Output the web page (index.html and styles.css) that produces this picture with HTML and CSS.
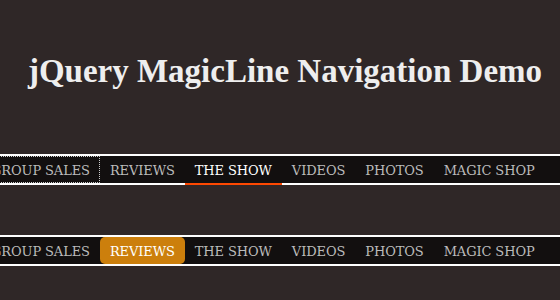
FILE: index.html
```html
<!DOCTYPE html>
<html lang="en">
<head>
  <meta charset="UTF-8" />
  <title>jQuery MagicLine Navigation Demo</title>
  <link rel="stylesheet" href="styles.css">
</head>
<body>

  <div class="page">
    <h1>jQuery MagicLine Navigation Demo</h1>

    <!-- Exemple 1 : ligne sous le lien actif -->
    <div class="nav-wrap">
      <ul class="nav" id="example-one">
        <li><a href="#" class="focused">Group Sales</a></li>
        <li><a href="#">Reviews</a></li>
        <li class="current"><a href="#">The Show</a><span class="magic-line"></span></li>
        <li><a href="#">Videos</a></li>
        <li><a href="#">Photos</a></li>
        <li><a href="#">Magic Shop</a></li>
      </ul>
    </div>

    <!-- Exemple 2 : bloc arrondi derriere le lien -->
    <div class="nav-wrap">
      <ul class="nav" id="example-two">
        <li><a href="#">Group Sales</a></li>
        <li class="current-two"><a href="#">Reviews</a></li>
        <li><a href="#">The Show</a></li>
        <li><a href="#">Videos</a></li>
        <li><a href="#">Photos</a></li>
        <li><a href="#">Magic Shop</a></li>
      </ul>
    </div>
  </div>

</body>
</html>
```

FILE: styles.css
```css
/* Fond sombre */
body {
  margin: 0;
  background-color: #2f2727;
  font-family: 'DejaVu Serif', serif;
  overflow: hidden;
}

.page {
  padding-top: 1px;
}

h1 {
  margin: 50px 0 63px;
  text-align: center;
  color: #eeeeee;
  font-family: 'Liberation Serif', serif;
  font-size: 33px;
  line-height: 40px;
  padding-left: 10px;
}

.nav-wrap {
  margin: 50px 0 0;
  background-color: rgba(0, 0, 0, 0.6);
  border-top: 2px solid white;
  border-bottom: 2px solid white;
}

.nav {
  list-style: none;
  margin: 0 0 0 -19px;
  padding: 0;
  display: flex;
}

.nav li {
  position: relative;
}

.nav a {
  display: block;
  position: relative;
  z-index: 2;
  color: #bbb;
  font-size: 13px;
  line-height: 17px;
  letter-spacing: -0.1px;
  padding: 6px 10px 4px 10px;
  text-decoration: none;
  text-transform: uppercase;
  white-space: nowrap;
}

.nav .current a,
.nav .current-two a {
  color: white;
}

.focused {
  outline: 1px dotted #ccc;
  outline-offset: -1px;
}

.magic-line {
  position: absolute;
  left: 0;
  right: 0;
  bottom: -2px;
  height: 2px;
  background: #fe4902;
}

.current-two a {
  background: #cc7f0c;
  border-radius: 5px;
}
```
